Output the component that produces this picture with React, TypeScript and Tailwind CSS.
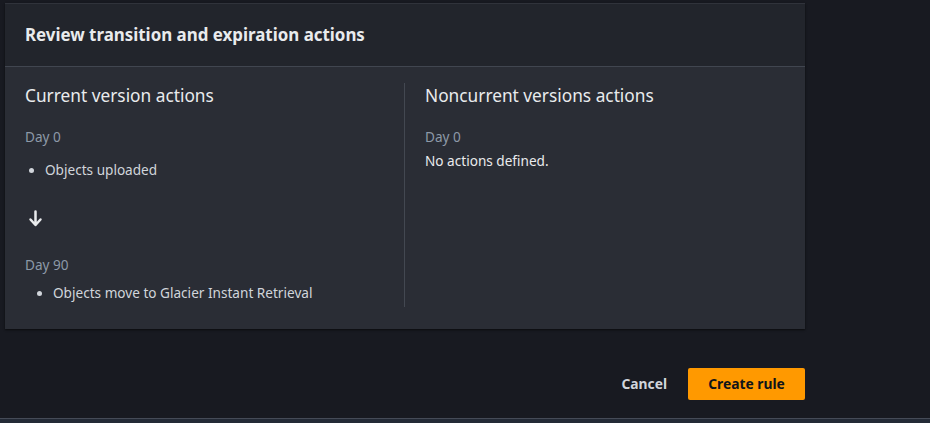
import React from "react";

export default function App() {
  return (
    <div
      className="w-[930px] h-[423px] bg-[#181a21] flex flex-col overflow-hidden"
      style={{ fontFamily: '"Noto Sans", "Open Sans", sans-serif' }}
    >
      <div className="pt-[3px] pl-[5px]">
        <div className="w-[800px] bg-[#2a2d35] shadow-[0_1px_2px_rgba(0,0,0,0.6)] border-t border-[#30333b]">
          <div className="h-[63px] bg-[#22252c] flex items-center px-5 border-b border-[#414650]">
            <h2 className="text-[16.9px] font-bold text-[#e9ebed] leading-none">
              Review transition and expiration actions
            </h2>
          </div>
          <div className="flex pt-4 pb-[22px] px-5">
            <div className="w-[380px] border-r border-[#434851] text-[13.6px]">
              <h3 className="text-[17.3px] text-[#e9ebed] leading-[26px]">Current version actions</h3>
              <div className="mt-[18px] text-[#8d99a8] leading-[20px]">Day 0</div>
              <ul className="mt-[13px] text-[#d1d5db] leading-[20px]">
                <li className="flex items-center gap-[11px] pl-[4px]">
                  <span className="w-[5px] h-[5px] rounded-full bg-[#d1d5db]" />
                  Objects uploaded
                </li>
              </ul>
              <div className="mt-[29px] pl-[3px] h-[18px] flex items-center">
                <svg width="15" height="17" viewBox="0 0 15 17" fill="none" stroke="#e9ebed" strokeWidth="2.5" strokeLinecap="round" strokeLinejoin="round">
                  <path d="M7.5 1.5v13M2.5 9.5l5 5.5 5-5.5" />
                </svg>
              </div>
              <div className="mt-[28px] text-[#8d99a8] leading-[20px]">Day 90</div>
              <ul className="mt-[8px] text-[#d1d5db] leading-[20px] pb-[4px]">
                <li className="flex items-center gap-[11px] pl-[12px]">
                  <span className="w-[5px] h-[5px] rounded-full bg-[#d1d5db]" />
                  Objects move to Glacier Instant Retrieval
                </li>
              </ul>
            </div>
            <div className="flex-1 pl-5 text-[13.6px]">
              <h3 className="text-[17.3px] text-[#e9ebed] leading-[26px]">Noncurrent versions actions</h3>
              <div className="mt-[18px] text-[#8d99a8] leading-[20px]">Day 0</div>
              <div className="mt-[4px] text-[#e9ebed] leading-[20px]">No actions defined.</div>
            </div>
          </div>
        </div>
      </div>
      <div className="w-[805px] flex justify-end items-center mt-[39px] gap-[21px]">
        <button className="text-[13.8px] font-bold text-[#d1d5db] leading-none">Cancel</button>
        <button className="w-[117px] h-[32px] rounded-[2px] bg-[#ff9900] text-[13.8px] font-bold text-[#0f141a] leading-none">
          Create rule
        </button>
      </div>
      <div className="flex-1" />
      <div className="h-[5px] bg-[#232a36] border-t border-[#454b57]" />
    </div>
  );
}
